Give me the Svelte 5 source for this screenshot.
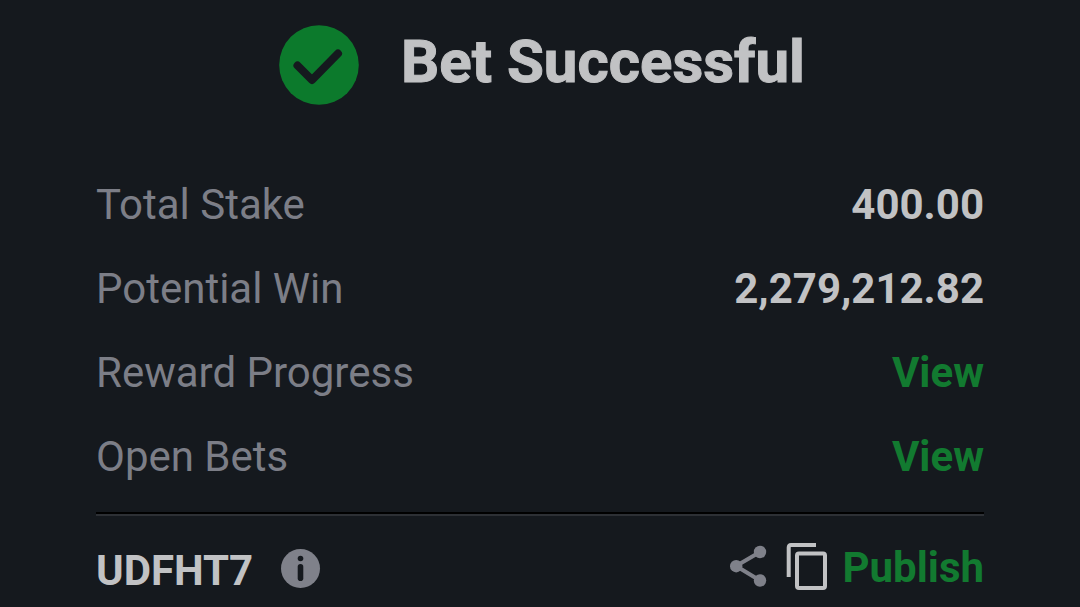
<script>
  const rows = [
    { label: "Total Stake", value: "400.00" },
    { label: "Potential Win", value: "2,279,212.82" },
    { label: "Reward Progress", link: "#rewards" },
    { label: "Open Bets", link: "#bets" }
  ];

  const bookingCode = "UDFHT7";
</script>

<main class="receipt">
  <header class="header">
    <svg class="success-icon" viewBox="0 0 80 80" aria-hidden="true">
      <circle cx="40" cy="40" r="39.8" />
      <path d="M18.5 40.5 L33 55 L59 28.5" />
    </svg>
    <h1 class="title">Bet Successful</h1>
  </header>

  <dl class="rows">
    {#each rows as row}
      <div class="row">
        <dt class="label">{row.label}</dt>
        <dd class="value">
          {#if row.link}
            <a class="link" href={row.link}>View</a>
          {:else}
            {row.value}
          {/if}
        </dd>
      </div>
    {/each}
  </dl>

  <footer class="footer">
    <div class="booking">
      <span class="code">{bookingCode}</span>
      <button class="icon-button" aria-label="About the booking code">
        <svg width="40" height="44" viewBox="0 0 40 44">
          <circle class="muted" cx="19.5" cy="19.5" r="19.5" />
          <circle class="cutout" cx="19.5" cy="9.5" r="2.8" />
          <rect class="cutout" x="16.7" y="15" width="5.6" height="17" rx="2.8" />
        </svg>
      </button>
    </div>
    <div class="actions">
      <button class="icon-button" aria-label="Share">
        <svg width="42" height="50" viewBox="0 0 42 50">
          <path class="share-line" d="M30 9 L6 23 L30 37.5" />
          <circle class="muted" cx="30" cy="9" r="6.2" />
          <circle class="muted" cx="6.2" cy="23.2" r="6.2" />
          <circle class="muted" cx="30" cy="37.5" r="6.2" />
        </svg>
      </button>
      <button class="icon-button" aria-label="Copy">
        <svg width="42" height="50" viewBox="0 0 42 50">
          <path class="copy-line" d="M30 2 H5 Q2.7 2 2.7 4.5 V34" />
          <rect class="copy-line" x="11" y="10.5" width="28" height="34.5" rx="2" />
        </svg>
      </button>
      <button class="publish">Publish</button>
    </div>
  </footer>
</main>

<style>
  :global(body) {
    background: #15191e;
  }

  .receipt {
    color: #c1c2c4;
    font-family: Roboto, sans-serif;
    font-size: 42px;
    padding: 25px 96px 0;
  }

  .header {
    align-items: center;
    display: flex;
    gap: 42px;
    justify-content: center;
    padding-left: 4px;
  }

  .success-icon {
    fill: #0c7a2c;
    height: 80px;
    width: 80px;
  }

  .success-icon path {
    fill: none;
    stroke: #15191e;
    stroke-linecap: round;
    stroke-linejoin: round;
    stroke-width: 8;
  }

  .title {
    -webkit-text-stroke: 1px currentColor;
    font-size: 60px;
    font-weight: 700;
    line-height: 72px;
    margin: 0;
    padding-bottom: 6px;
  }

  .rows {
    border-bottom: 2px solid #000;
    margin: 0;
    padding: 58px 0 13px;
  }

  .row {
    display: flex;
    justify-content: space-between;
    line-height: 84px;
  }

  .label {
    color: #7c7e87;
  }

  .value {
    font-weight: 700;
    margin: 0;
  }

  .link {
    color: #127a30;
    text-decoration: none;
  }

  .footer {
    align-items: flex-start;
    border-top: 2px solid #2d3035;
    display: flex;
    justify-content: space-between;
    padding-top: 27px;
  }

  .booking,
  .actions {
    align-items: center;
    display: flex;
    line-height: 48px;
  }

  .booking {
    gap: 28px;
    padding-top: 4px;
  }

  .code {
    font-weight: 700;
  }

  .actions {
    gap: 14px;
  }

  .icon-button,
  .publish {
    background: none;
    border: 0;
    cursor: pointer;
    padding: 0;
  }

  .icon-button {
    display: flex;
  }

  .publish {
    color: #127a30;
    font: inherit;
    font-weight: 700;
  }

  .muted {
    fill: #7f818a;
  }

  .cutout {
    fill: #15191e;
  }

  .share-line {
    fill: none;
    stroke: #7f818a;
    stroke-width: 4;
  }

  .copy-line {
    fill: none;
    stroke: #c1c2c4;
    stroke-width: 4;
  }
</style>
